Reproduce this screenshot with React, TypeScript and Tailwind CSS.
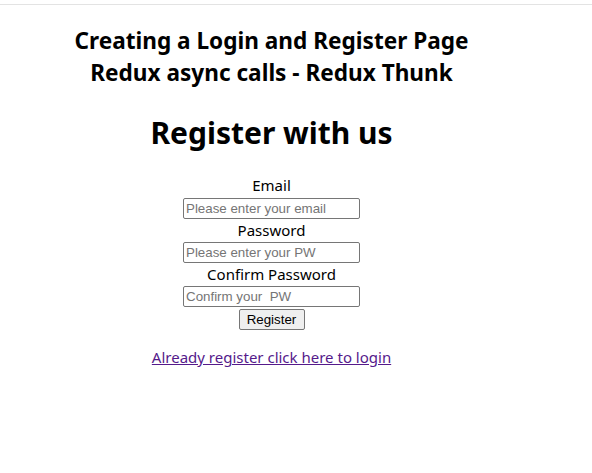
export default function App() {
  return (
    <div className="min-h-[473px] bg-white font-['Noto_Sans',sans-serif] text-black">
      <div className="h-1" />
      <div className="border-t border-[#e3e3e3]" />
      <div className="w-[543px] text-center">
        <div className="pt-[20px] text-[22.6px] font-bold leading-[32px]">
          <h3>Creating a Login and Register Page</h3>
          <h3>Redux async calls - Redux Thunk</h3>
        </div>
        <h1 className="mt-[22px] text-[30px] font-bold leading-[44px]">Register with us</h1>
        <form className="mt-[20px] flex flex-col items-center">
          <label className="h-[21px] text-[15px] leading-[21px]">Email</label>
          <input
            type="text"
            placeholder="Please enter your email"
            className="mt-[2px] h-[21px] w-[177px] rounded-[2px] border border-[#767676] px-[2px] font-['Liberation_Sans',sans-serif] text-[13.33px] placeholder:text-[#757575]"
          />
          <label className="h-[23px] text-[15px] leading-[23px]">Password</label>
          <input
            type="password"
            placeholder="Please enter your PW"
            className="h-[21px] w-[177px] rounded-[2px] border border-[#767676] px-[2px] font-['Liberation_Sans',sans-serif] text-[13.33px] placeholder:text-[#757575]"
          />
          <label className="h-[23px] text-[15px] leading-[23px]">Confirm Password</label>
          <input
            type="password"
            placeholder="Confirm your  PW"
            className="h-[21px] w-[177px] rounded-[2px] border border-[#767676] px-[2px] font-['Liberation_Sans',sans-serif] text-[13.33px] placeholder:text-[#757575]"
          />
          <button
            type="button"
            className="mt-[2px] h-[21px] w-[66px] rounded-[2px] border border-[#767676] bg-[#efefef] font-['Liberation_Sans',sans-serif] text-[13.33px] leading-none"
          >
            Register
          </button>
        </form>
        <div className="mt-[15px]">
          <a href="#" className="text-[15px] leading-[22px] text-[#551a8b] underline">
            Already register click here to login
          </a>
        </div>
      </div>
    </div>
  );
}
